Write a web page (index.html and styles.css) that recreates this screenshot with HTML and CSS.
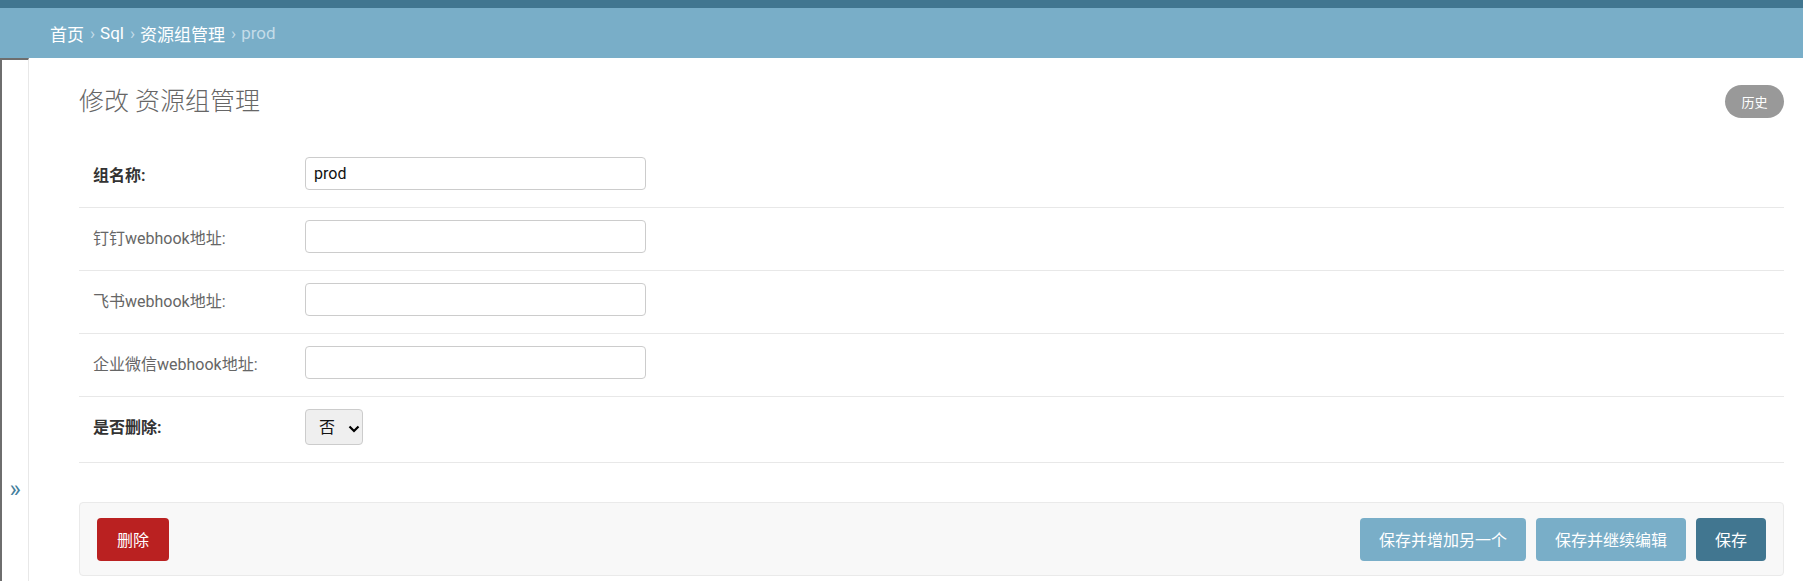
FILE: index.html
```html
<!DOCTYPE html>
<html lang="zh-CN">
<head>
<meta charset="utf-8">
<title>修改 资源组管理</title>
<link rel="stylesheet" href="styles.css">
</head>
<body>
<div class="topbar"></div>
<nav class="breadcrumbs">
  <a href="#">首页</a><span class="sep">›</span><a href="#">Sql</a><span class="sep">›</span><a href="#">资源组管理</a><span class="sep">›</span><span class="current">prod</span>
</nav>
<div class="main">
  <button class="toggle-nav" type="button"><span class="toggle-glyph">»</span></button>
  <div class="content">
    <div class="title-row">
      <h1 class="title">修改 资源组管理</h1>
      <a class="history" href="#">历史</a>
    </div>
    <form class="form">
      <div class="form-row">
        <label class="label required">组名称:</label>
        <input class="text-input" type="text" value="prod">
      </div>
      <div class="form-row">
        <label class="label">钉钉webhook地址:</label>
        <input class="text-input" type="text" value="">
      </div>
      <div class="form-row">
        <label class="label">飞书webhook地址:</label>
        <input class="text-input" type="text" value="">
      </div>
      <div class="form-row">
        <label class="label">企业微信webhook地址:</label>
        <input class="text-input" type="text" value="">
      </div>
      <div class="form-row">
        <label class="label required">是否删除:</label>
        <select class="select"><option>否</option><option>是</option></select>
      </div>
      <div class="submit-row">
        <a class="btn btn-delete" href="#">删除</a>
        <div class="spacer"></div>
        <button class="btn btn-light" type="button">保存并增加另一个</button>
        <button class="btn btn-light" type="button">保存并继续编辑</button>
        <button class="btn btn-dark" type="button">保存</button>
      </div>
    </form>
  </div>
</div>
</body>
</html>
```
FILE: styles.css
```css
* { box-sizing: border-box; }
html, body { margin: 0; padding: 0; }
body {
  font-family: Roboto, "Noto Sans CJK SC", sans-serif;
  color: #333;
  background: #fff;
  height: 581px;
  overflow: hidden;
}
.topbar { height: 8px; background: #417690; }
.breadcrumbs {
  height: 50px;
  background: #79aec8;
  padding-left: 50px;
  display: flex;
  align-items: center;
  font-size: 17px;
  color: #c4dce8;
}
.breadcrumbs a { color: #fff; text-decoration: none; }
.breadcrumbs .sep { margin: 0 5px 0 6px; }
.breadcrumbs .current { color: #c4dce8; }
.main { display: flex; height: 523px; }
.toggle-nav {
  flex: 0 0 29px;
  width: 29px;
  border: 0;
  border-left: 2px solid #6e6e6e;
  border-top: 2px solid #6e6e6e;
  border-right: 1px solid #e8e8e8;
  background: #fff;
  padding: 0;
  display: flex;
  justify-content: center;
  align-items: flex-start;
  color: #447e9b;
  font-size: 24px;
  font-family: Roboto, sans-serif;
  line-height: 23px;
  padding-top: 418px;
}
.toggle-glyph { display: block; }
.content {
  flex: 1;
  padding: 27px 19px 0 50px;
}
.title-row {
  display: flex;
  align-items: center;
  justify-content: space-between;
  height: 33px;
}
.title {
  margin: 0;
  font-size: 25px;
  font-weight: 300;
  color: #666;
  line-height: 30px;
}
.history {
  display: flex;
  align-items: center;
  justify-content: center;
  height: 33px;
  width: 59px;
  border-radius: 17px;
  background: #999;
  color: #fff;
  font-size: 13px;
  text-decoration: none;
}
.form { margin-top: 27px; }
.form-row {
  display: flex;
  align-items: flex-start;
  padding: 12px 0 17px 14px;
  border-bottom: 1px solid #e8e8e8;
}
.label {
  flex: 0 0 212px;
  font-size: 16px;
  line-height: 20px;
  padding-top: 9px;
  color: #666;
}
.label.required { font-weight: bold; color: #333; }
.text-input {
  width: 341px;
  height: 33px;
  border: 1px solid #ccc;
  border-radius: 4px;
  padding: 0 8px;
  font-family: Roboto, "Noto Sans CJK SC", sans-serif;
  font-size: 16px;
  color: #111;
  background: #fff;
}
.select {
  -webkit-appearance: none;
  appearance: none;
  width: 58px;
  height: 36px;
  border: 1px solid #ccc;
  border-radius: 4px;
  background-color: #efefef;
  background-image: url("data:image/svg+xml,%3Csvg xmlns='http://www.w3.org/2000/svg' width='12' height='8' viewBox='0 0 12 8'%3E%3Cpath d='M1.5 1.5 L6 6 L10.5 1.5' fill='none' stroke='%23000' stroke-width='2.2'/%3E%3C/svg%3E");
  background-repeat: no-repeat;
  background-position: 42px 15px;
  padding: 0 0 0 13px;
  font-family: Roboto, "Noto Sans CJK SC", sans-serif;
  font-size: 16px;
  color: #111;
}
.submit-row {
  display: flex;
  align-items: center;
  margin-top: 39px;
  height: 74px;
  padding: 0 17px;
  background: #f8f8f8;
  border: 1px solid #eaeaea;
  border-radius: 4px;
}
.spacer { flex: 1; }
.btn {
  display: flex;
  align-items: center;
  justify-content: center;
  height: 43px;
  padding: 0 19px;
  border: 0;
  border-radius: 4px;
  font-family: Roboto, "Noto Sans CJK SC", sans-serif;
  font-size: 16px;
  color: #fff;
  text-decoration: none;
  margin-left: 10px;
}
.btn-delete { background: #ba2121; margin-left: 0; padding: 0 20px; }
.btn-light { background: #79aec8; }
.btn-dark { background: #417690; }
```
